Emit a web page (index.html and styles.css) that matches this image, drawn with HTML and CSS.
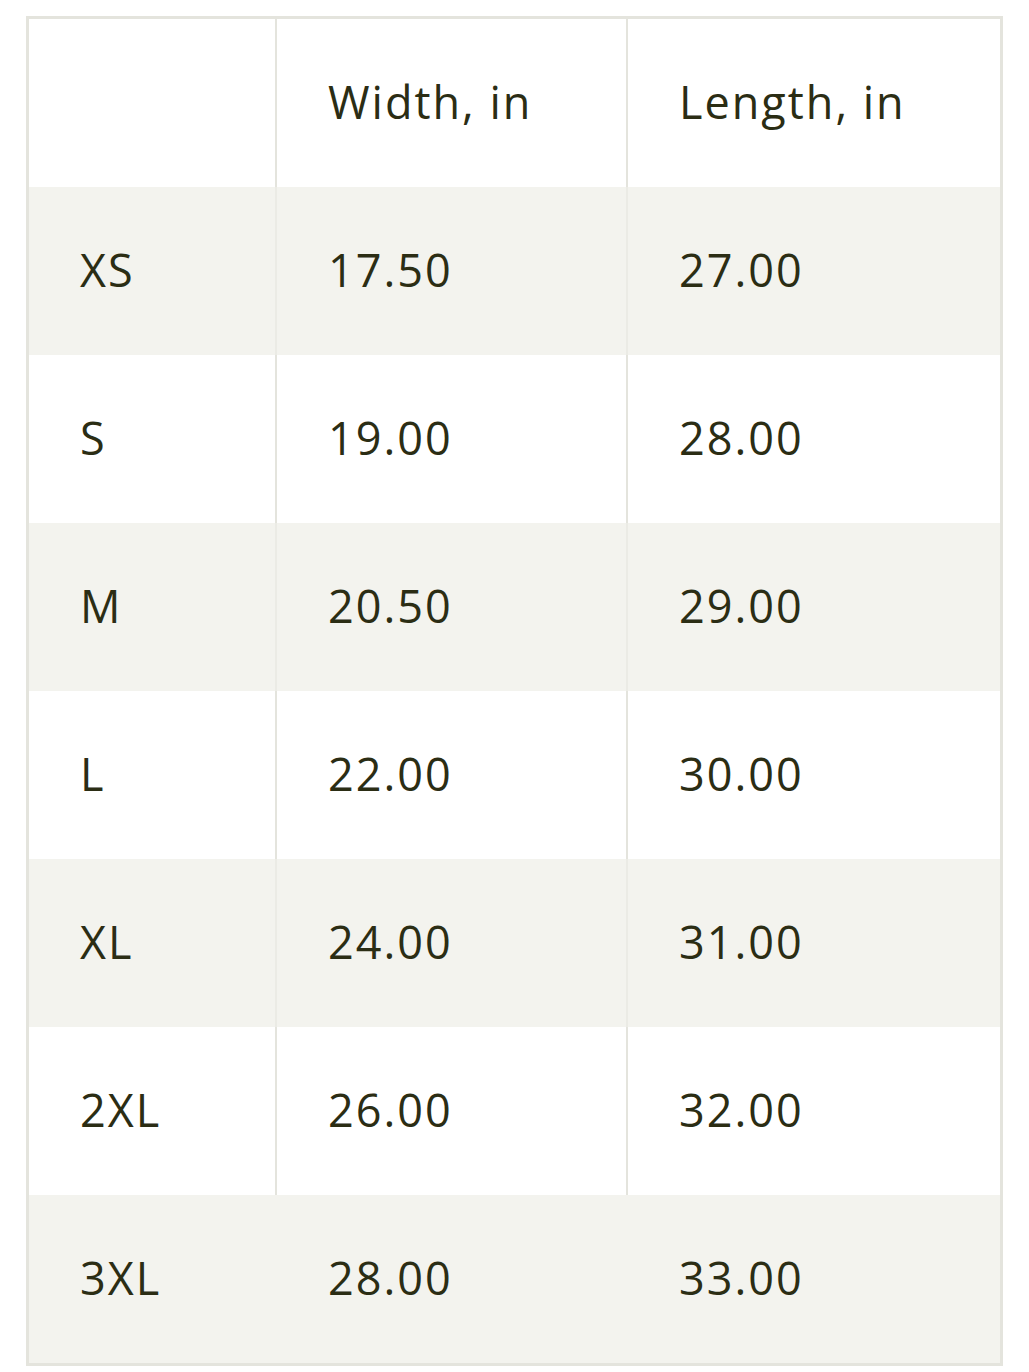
FILE: index.html
```html
<!DOCTYPE html>
<html>
<head>
<meta charset="utf-8">
<link rel="stylesheet" href="styles.css">
</head>
<body>
<table class="size-table">
  <colgroup>
    <col class="c1"><col class="c2"><col class="c3">
  </colgroup>
  <thead>
    <tr><th></th><th>Width, in</th><th>Length, in</th></tr>
  </thead>
  <tbody>
    <tr class="alt"><td>XS</td><td>17.50</td><td>27.00</td></tr>
    <tr><td>S</td><td>19.00</td><td>28.00</td></tr>
    <tr class="alt"><td>M</td><td>20.50</td><td>29.00</td></tr>
    <tr><td>L</td><td>22.00</td><td>30.00</td></tr>
    <tr class="alt"><td>XL</td><td>24.00</td><td>31.00</td></tr>
    <tr><td>2XL</td><td>26.00</td><td>32.00</td></tr>
    <tr class="alt last"><td>3XL</td><td>28.00</td><td>33.00</td></tr>
  </tbody>
</table>
</body>
</html>
```
FILE: styles.css
```css
html, body {
  margin: 0;
  padding: 0;
  background: #ffffff;
}
body {
  padding: 16px 0 0 26px;
}
.size-table {
  border-collapse: separate;
  border-spacing: 0;
  border: 3px solid #e4e4dd;
  width: 977px;
  table-layout: fixed;
  font-family: "Open Sans", "Liberation Sans", sans-serif;
  color: #2b2d14;
}
.c1 { width: 248px; }
.c2 { width: 351px; }
.c3 { width: 372px; }
.size-table th,
.size-table td {
  height: 168px;
  padding: 0 0 4px 51px;
  text-align: left;
  font-weight: 400;
  font-size: 45px;
  letter-spacing: 2px;
  line-height: 1;
  vertical-align: middle;
  box-sizing: border-box;
  white-space: nowrap;
}
.size-table th {
  height: 168px;
}
.size-table th:not(:last-child),
.size-table td:not(:last-child) {
  border-right: 2px solid #e4e4dd;
}
.size-table tr.alt td {
  background: #f3f3ee;
}
.size-table tr.alt td:not(:last-child) {
  border-right-color: #ebebe5;
}
.size-table tr.last td:not(:last-child) {
  border-right-color: #f3f3ee;
}
```
